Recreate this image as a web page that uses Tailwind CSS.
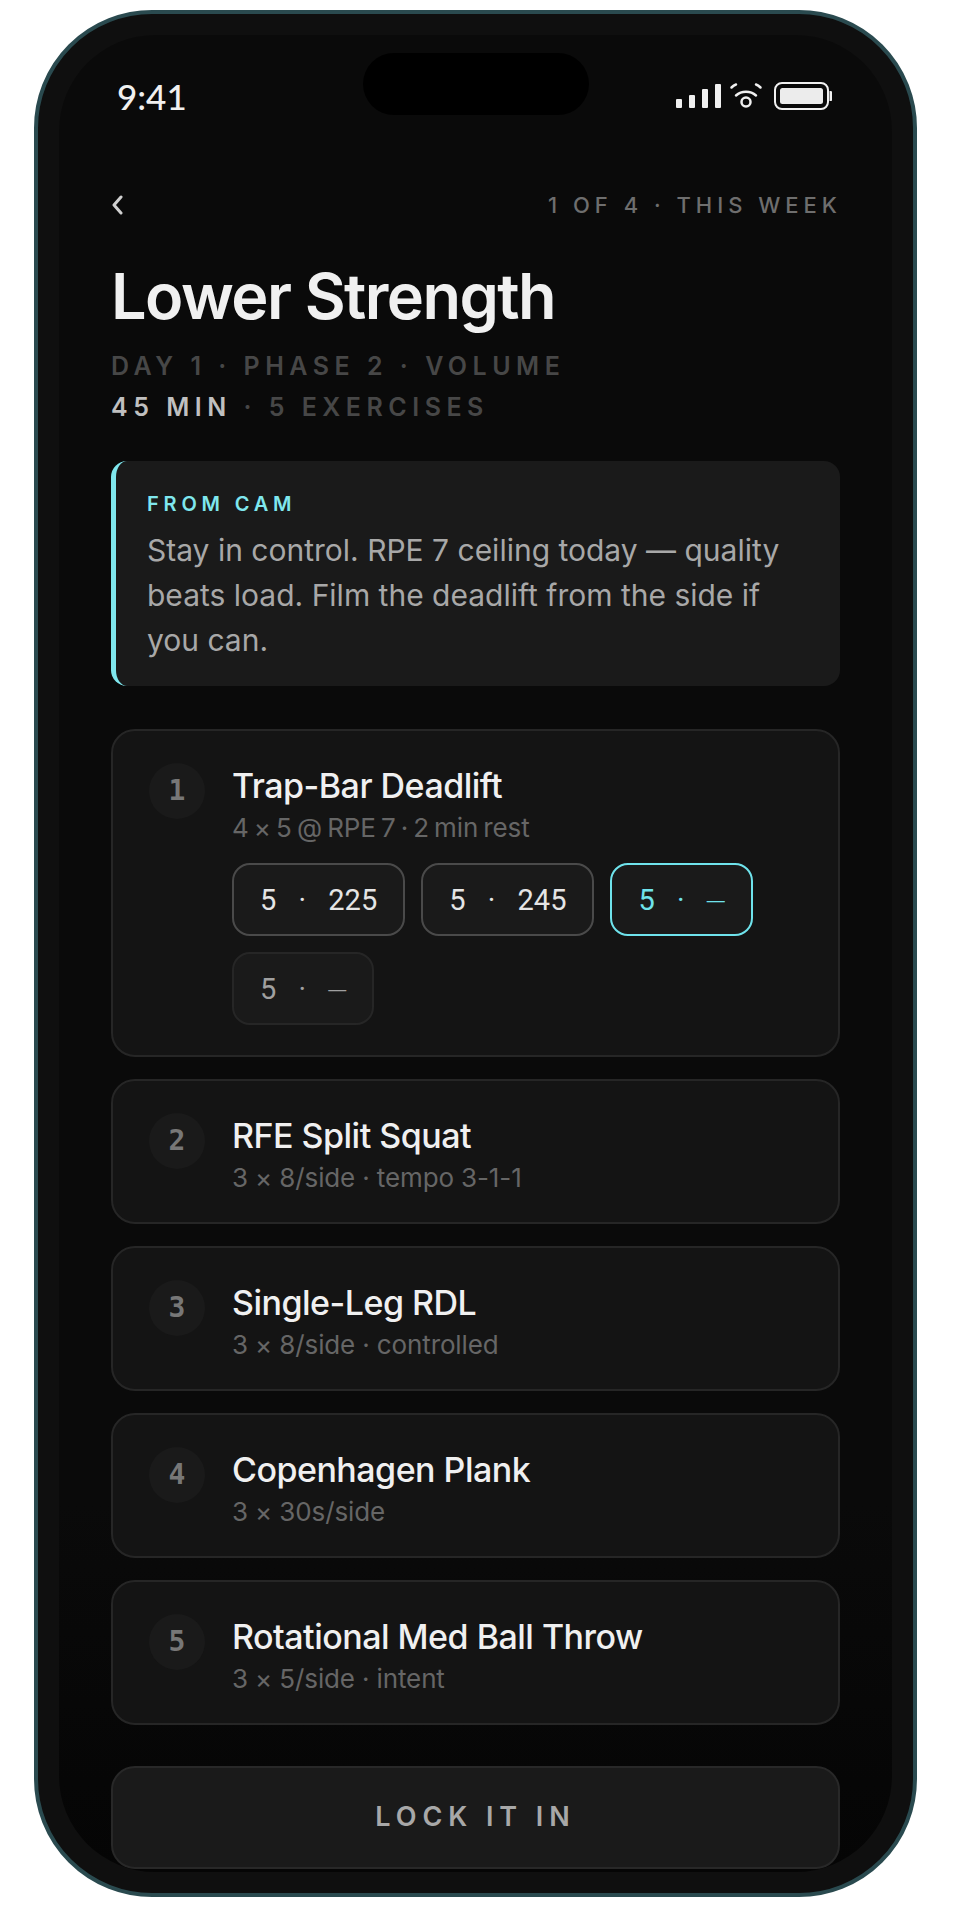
<!DOCTYPE html>
<html lang="en">
<head>
  <meta charset="UTF-8" />
  <meta name="viewport" content="width=device-width, initial-scale=1.0" />
  <title>Lower Strength</title>
  <script src="https://cdn.jsdelivr.net/npm/@tailwindcss/browser@4"></script>
</head>
<body class="bg-white font-['Inter',sans-serif]">
  <div class="w-[954px] h-[1920px] pt-[10px] pl-[34px]">
    <!-- phone frame -->
    <div class="relative w-[883px] h-[1887px] rounded-[118px] border-[4px] border-[#2a4a4f] bg-[#0f0f0f] p-[21px]">
      <div class="absolute top-[39px] left-[325px] w-[226px] h-[62px] rounded-[31px] bg-black"></div>

      <div class="h-full rounded-[96px] bg-gradient-to-b from-[#0a0a0a] from-80% to-[#050505] overflow-hidden pt-[46px]">
        <!-- status bar -->
        <div class="flex items-center justify-between h-[30px] pl-[58px] pr-[60px]">
          <span class="text-[35px] leading-[30px] font-medium text-[#f0f0f0] font-['Lato',sans-serif]">9:41</span>
          <svg width="156" height="30" viewBox="0 0 156 30" fill="none">
            <rect x="0" y="18" width="6" height="9" rx="1" fill="#f0f0f0" />
            <rect x="13" y="14" width="6" height="13" rx="1" fill="#f0f0f0" />
            <rect x="26" y="8" width="6" height="19" rx="1" fill="#f0f0f0" />
            <rect x="39" y="3" width="6" height="24" rx="1" fill="#f0f0f0" />
            <circle cx="70" cy="21" r="4.5" stroke="#f0f0f0" stroke-width="2.5" />
            <path d="M60 14.5C65.5 9.5 74.5 9.5 80 14.5" stroke="#f0f0f0" stroke-width="2.5" stroke-linecap="round" />
            <path d="M55.5 6.5C57 5 58.5 4 60 3.5M84.5 6.5C83 5 81.5 4 80 3.5" stroke="#f0f0f0" stroke-width="2.5" stroke-linecap="round" />
            <rect x="99" y="2" width="53" height="26" rx="7" stroke="#f0f0f0" stroke-width="2" />
            <rect x="104" y="7" width="43" height="16" rx="2.5" fill="#ececec" />
            <path d="M153.5 10h1a2 2 0 0 1 2 2v6a2 2 0 0 1-2 2h-1z" fill="#f0f0f0" />
          </svg>
        </div>

        <div class="px-[52px]">
          <!-- top row -->
          <div class="flex items-center justify-between h-[24px] mt-[82px]">
            <svg width="12" height="20" viewBox="0 0 12 20" fill="none">
              <path d="M10 2L3 10L10 18" stroke="#d0d0d0" stroke-width="3" stroke-linecap="round" stroke-linejoin="round" />
            </svg>
            <span class="text-[22px] leading-[24px] font-medium tracking-[0.227em] text-[#6e6e6e] -mr-[2px]">1 OF 4 · THIS WEEK</span>
          </div>

          <h1 class="mt-[45px] text-[63px] leading-[68px] font-semibold tracking-[-0.025em] text-[#f0f0f0]">Lower Strength</h1>

          <div class="mt-[16px] text-[25px] leading-[41px] font-semibold tracking-[0.22em] text-[#474747]">
            <div>DAY 1 · PHASE 2 · VOLUME</div>
            <div><span class="text-[#c0c0c0]">45 MIN</span> · 5 EXERCISES</div>
          </div>

          <!-- coach note -->
          <div class="mt-[33px] h-[225px] rounded-[16px] border-l-[5px] border-[#7fe7ee] bg-[#1a1a1a] pl-[31px] pr-[40px] pt-[31px]">
            <div class="text-[20px] leading-[24px] font-semibold tracking-[0.24em] text-[#7fe7ee]">FROM CAM</div>
            <p class="mt-[12px] text-[30px] leading-[45px] text-[#a8a8a8]">Stay in control. RPE 7 ceiling today — quality beats load. Film the deadlift from the side if you can.</p>
          </div>

          <!-- exercises -->
          <div class="mt-[43px] flex flex-col gap-[22px]">
            <div class="h-[328px] rounded-[24px] border-2 border-[#262626] bg-[#141414] pl-[36px] pt-[32px] flex gap-[27px]">
              <div class="w-[56px] h-[56px] shrink-0 rounded-full bg-[#1a1a1a] flex items-center justify-center text-[28px] font-semibold text-[#777777] font-['DejaVu_Sans_Mono',monospace]">1</div>
              <div class="pr-[50px] pt-[2px]">
                <div class="text-[34px] leading-[42px] font-medium tracking-[-0.015em] text-[#f0f0f0]">Trap-Bar Deadlift</div>
                <div class="mt-[6px] text-[26px] leading-[30px] tracking-[-0.005em] [word-spacing:-2px] text-[#666666]">4 × 5 @ RPE 7 · 2 min rest</div>
                <div class="mt-[20px] flex flex-wrap gap-[16px] text-[29px] leading-[32px] font-['Roboto',sans-serif]">
                  <div class="h-[73px] rounded-[18px] border-[2.5px] border-[#4a4a4a] bg-[#1a1a1a] px-[26px] flex items-center gap-[18px] text-[#e5e5e5]"><span>5</span><span class="w-[16px] text-center">·</span><span>225</span></div>
                  <div class="h-[73px] rounded-[18px] border-[2.5px] border-[#4a4a4a] bg-[#1a1a1a] px-[26px] flex items-center gap-[18px] text-[#e5e5e5]"><span>5</span><span class="w-[16px] text-center">·</span><span>245</span></div>
                  <div class="h-[73px] rounded-[18px] border-[2.5px] border-[#6fe3ec] bg-[#1a1a1a] px-[26px] flex items-center gap-[18px] text-[#6fe3ec]"><span>5</span><span class="w-[16px] text-center">·</span><span class="text-[18px] font-['Liberation_Sans',sans-serif]">—</span></div>
                  <div class="h-[73px] rounded-[18px] border-[2.5px] border-[#262626] bg-[#1a1a1a] px-[26px] flex items-center gap-[18px] text-[#a0a0a0]"><span>5</span><span class="w-[16px] text-center">·</span><span class="text-[18px] font-['Liberation_Sans',sans-serif]">—</span></div>
                </div>
              </div>
            </div>

            <div class="h-[145px] rounded-[24px] border-2 border-[#262626] bg-[#141414] pl-[36px] pt-[32px] flex gap-[27px]">
              <div class="w-[56px] h-[56px] shrink-0 rounded-full bg-[#1a1a1a] flex items-center justify-center text-[28px] font-semibold text-[#777777] font-['DejaVu_Sans_Mono',monospace]">2</div>
              <div class="pt-[2px]">
                <div class="text-[34px] leading-[42px] font-medium tracking-[-0.015em] text-[#f0f0f0]">RFE Split Squat</div>
                <div class="mt-[6px] text-[26px] leading-[30px] tracking-[-0.005em] text-[#666666]">3 × 8/side · tempo 3-1-1</div>
              </div>
            </div>

            <div class="h-[145px] rounded-[24px] border-2 border-[#262626] bg-[#141414] pl-[36px] pt-[32px] flex gap-[27px]">
              <div class="w-[56px] h-[56px] shrink-0 rounded-full bg-[#1a1a1a] flex items-center justify-center text-[28px] font-semibold text-[#777777] font-['DejaVu_Sans_Mono',monospace]">3</div>
              <div class="pt-[2px]">
                <div class="text-[34px] leading-[42px] font-medium tracking-[-0.015em] text-[#f0f0f0]">Single-Leg RDL</div>
                <div class="mt-[6px] text-[26px] leading-[30px] tracking-[-0.005em] text-[#666666]">3 × 8/side · controlled</div>
              </div>
            </div>

            <div class="h-[145px] rounded-[24px] border-2 border-[#262626] bg-[#141414] pl-[36px] pt-[32px] flex gap-[27px]">
              <div class="w-[56px] h-[56px] shrink-0 rounded-full bg-[#1a1a1a] flex items-center justify-center text-[28px] font-semibold text-[#777777] font-['DejaVu_Sans_Mono',monospace]">4</div>
              <div class="pt-[2px]">
                <div class="text-[34px] leading-[42px] font-medium tracking-[-0.015em] text-[#f0f0f0]">Copenhagen Plank</div>
                <div class="mt-[6px] text-[26px] leading-[30px] tracking-[-0.005em] text-[#666666]">3 × 30s/side</div>
              </div>
            </div>

            <div class="h-[145px] rounded-[24px] border-2 border-[#262626] bg-[#141414] pl-[36px] pt-[32px] flex gap-[27px]">
              <div class="w-[56px] h-[56px] shrink-0 rounded-full bg-[#1a1a1a] flex items-center justify-center text-[28px] font-semibold text-[#777777] font-['DejaVu_Sans_Mono',monospace]">5</div>
              <div class="pt-[2px]">
                <div class="text-[34px] leading-[42px] font-medium tracking-[-0.015em] text-[#f0f0f0]">Rotational Med Ball Throw</div>
                <div class="mt-[6px] text-[26px] leading-[30px] tracking-[-0.005em] text-[#666666]">3 × 5/side · intent</div>
              </div>
            </div>
          </div>

          <button class="mt-[41px] w-full h-[103px] rounded-[24px] border-2 border-[#282828] bg-[#1a1a1a] text-[27px] font-semibold tracking-[0.22em] text-[#a8a8a8]">LOCK IT IN</button>
        </div>
      </div>
    </div>
  </div>
</body>
</html>
